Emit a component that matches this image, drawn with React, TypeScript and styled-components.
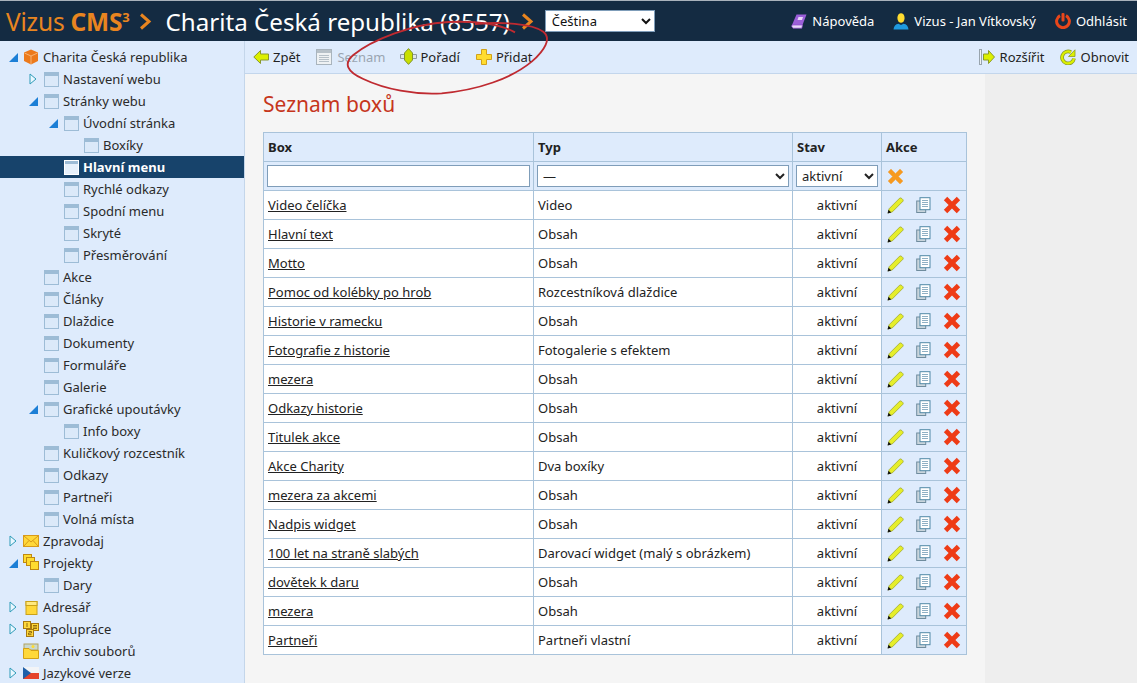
import React from "react";
import styled, { createGlobalStyle } from "styled-components";

const Global = createGlobalStyle`
  html, body { margin: 0; padding: 0; height: 683px; overflow: hidden; background: #f5f5f5; }
  body { font-family: "Noto Sans", "Open Sans", "Liberation Sans", sans-serif; font-size: 13px; color: #222; }
  * { box-sizing: border-box; }
`;

const Page = styled.div`
  position: relative;
  width: 1137px;
  height: 683px;
  display: flex;
  flex-direction: column;
  overflow: hidden;
`;

const Header = styled.header`
  height: 41px;
  flex: none;
  background: #142b42;
  border-top: 1px solid #a9b2bb;
  display: flex;
  align-items: center;
  padding: 0 10px 0 6px;
`;
const Brand = styled.span`
  font-size: 24.5px;
  color: #e9851f;
  white-space: nowrap;
  margin-right: 9px;
  letter-spacing: -0.2px;
  b { font-weight: 700; }
  sup { font-size: 13px; font-weight: 700; vertical-align: 9px; line-height: 0; }
`;
const Chevron = styled.svg`
  flex: none;
  width: 13px;
  height: 17px;
`;
const SiteName = styled.span`
  font-size: 24.15px;
  color: #fff;
  margin: 0 11px 0 14px;
  white-space: nowrap;
`;
const LangSelect = styled.select`
  width: 110px;
  height: 22px;
  margin-left: 11px;
  font-family: "Noto Sans", sans-serif;
  font-size: 13px;
  background: #fff;
  border: 1px solid #7f9db9;
  border-radius: 0;
  padding: 0 0 0 2px;
  color: #111;
`;
const HeaderLinks = styled.nav`
  margin-left: auto;
  display: flex;
  align-items: center;
`;
const HeaderLink = styled.a<{ $ml: number }>`
  display: flex;
  align-items: center;
  gap: 5px;
  color: #fff;
  font-size: 13px;
  margin-left: ${(p) => p.$ml}px;
  white-space: nowrap;
`;

const Body = styled.div`
  flex: 1;
  display: flex;
  min-height: 0;
`;
const Sidebar = styled.aside`
  width: 245px;
  flex: none;
  background: #deebfc;
  border-right: 1px solid #c4d6ea;
  padding-top: 5px;
  overflow: hidden;
`;
const TreeRow = styled.div<{ $level: number; $active?: boolean }>`
  height: 22px;
  display: flex;
  align-items: center;
  padding-left: ${(p) => 9 + p.$level * 20}px;
  background: ${(p) => (p.$active ? "#17436b" : "transparent")};
  color: ${(p) => (p.$active ? "#fff" : "#2a2a2a")};
  font-weight: ${(p) => (p.$active ? 700 : 400)};
  white-space: nowrap;
`;
const Toggle = styled.span`
  width: 10px;
  height: 12px;
  flex: none;
  display: flex;
  align-items: center;
  margin-right: 4px;
`;
const TreeIcon = styled.span`
  width: 16px;
  height: 16px;
  flex: none;
  display: flex;
  align-items: center;
  justify-content: center;
  margin-right: 4px;
`;

const Main = styled.main`
  flex: 1;
  display: flex;
  flex-direction: column;
  min-width: 0;
`;
const Toolbar = styled.div`
  height: 33px;
  flex: none;
  background: #deebfc;
  border-bottom: 1px solid #c3d6ec;
  display: flex;
  align-items: center;
  padding: 0 8px 1px 8px;
`;
const ToolItem = styled.a<{ $disabled?: boolean; $ml?: number; $gap?: number }>`
  display: flex;
  align-items: center;
  gap: ${(p) => p.$gap ?? 4}px;
  margin-left: ${(p) => p.$ml ?? 0}px;
  color: ${(p) => (p.$disabled ? "#9aa5b1" : "#222")};
  white-space: nowrap;
`;
const Spacer = styled.div`
  flex: 1;
`;
const ContentRow = styled.div`
  flex: 1;
  display: flex;
  min-height: 0;
`;
const Content = styled.section`
  width: 740px;
  flex: none;
  background: #f5f5f5;
  padding: 16px 0 0 18px;
`;
const RightPane = styled.div`
  flex: 1;
  background: #eeeeee;
`;
const Title = styled.h1`
  margin: 0 0 13px;
  font-weight: 400;
  font-size: 21px;
  line-height: 29px;
  color: #c6361c;
`;
const Table = styled.table`
  width: 703px;
  table-layout: fixed;
  border-collapse: collapse;
  background: #fff;
  th, td { border: 1px solid #a9c3da; height: 29px; padding: 0 4px; text-align: left; }
  th { background: #deebfc; font-weight: 700; color: #222; }
`;
const FilterCell = styled.td`
  && { background: #deebfc; }
`;
const ActionCell = styled.td`
  && { background: #deebfc; padding: 0 0 0 5px; }
`;
const StateCell = styled.td`
  && { text-align: center; }
`;
const Link = styled.a`
  color: #222;
  text-decoration: underline;
`;
const FilterInput = styled.input`
  display: block;
  width: 263px;
  height: 22px;
  background: #fff;
  border: 1px solid #7f9db9;
  margin-left: -1px;
  padding: 0 3px;
`;
const FilterSelect = styled.select<{ $w: number }>`
  display: block;
  width: ${(p) => p.$w}px;
  height: 22px;
  background: #fff;
  border: 1px solid #7f9db9;
  border-radius: 0;
  margin-left: -1px;
  font-family: "Noto Sans", sans-serif;
  font-size: 13px;
  color: #222;
  padding: 0 0 0 1px;
`;
const Actions = styled.div`
  display: flex;
  align-items: center;
  gap: 12px;
`;
const Scribble = styled.svg`
  position: absolute;
  left: 335px;
  top: 10px;
  width: 220px;
  height: 95px;
  pointer-events: none;
`;

/* ---------- drawn icons ---------- */
const PageIcon = ({ light }: { light?: boolean }) => (
  <svg width="15" height="15" viewBox="0 0 15 15">
    <rect x=".5" y=".5" width="14" height="14" fill={light ? "#e6f0fb" : "#dbe9f9"} stroke={light ? "#fff" : "#9dbcd6"} />
    <rect x="1" y="1" width="13" height="3" fill="#9dbcd6" />
  </svg>
);
const Open = () => (
  <svg width="9" height="9" viewBox="0 0 9 9"><path d="M0 9 L9 0 V9Z" fill="#1c7fd6" /></svg>
);
const Closed = () => (
  <svg width="8" height="12" viewBox="0 0 8 12"><path d="M1 1 L7 6 L1 11Z" fill="#eaf7ff" stroke="#2e9bb8" /></svg>
);
const Cube = () => (
  <svg width="16" height="16" viewBox="0 0 16 16">
    <path d="M8 0.5 L15 3.5 V12 L8 15.5 L1 12 V3.5Z" fill="#ec7a1c" />
    <path d="M1.5 4 L8 7 L14.5 4 M8 7 V15" fill="none" stroke="#f9c48f" strokeWidth=".8" />
  </svg>
);
const Mail = () => (
  <svg width="16" height="12" viewBox="0 0 16 12">
    <rect x=".5" y=".5" width="15" height="11" fill="#ffd83a" stroke="#d89a1a" />
    <path d="M1 1 L8 7 L15 1 M1 11 L6 5.5 M15 11 L10 5.5" fill="none" stroke="#d89a1a" />
  </svg>
);
const Stack = () => (
  <svg width="16" height="16" viewBox="0 0 16 16" style={{ marginTop: -2 }}>
    <rect x=".5" y=".5" width="8" height="8" fill="#ffdc30" stroke="#c08a10" />
    <rect x="3.5" y="3.5" width="8" height="8" fill="#ffdc30" stroke="#c08a10" />
    <rect x="7.5" y="7.5" width="8" height="8" fill="#ffdc30" stroke="#c08a10" />
  </svg>
);
const Book = () => (
  <svg width="14" height="15" viewBox="0 0 14 15">
    <rect x="2" y="1.5" width="11" height="13" fill="#ffd83a" stroke="#c9a21a" />
    <rect x="2" y="1.5" width="11" height="4" fill="#ffe980" stroke="#c9a21a" />
  </svg>
);
const Numbers = () => (
  <svg width="16" height="16" viewBox="0 0 16 16">
    <rect x=".5" y=".5" width="7" height="7" fill="#ffd83a" stroke="#a8780f" />
    <rect x="8.5" y="2.5" width="7" height="7" fill="#ffd83a" stroke="#a8780f" />
    <rect x="3.5" y="8.5" width="7" height="7" fill="#ffd83a" stroke="#a8780f" />
    <path d="M4 2 V6 M10 4.5 H14 M10 6 H14 M10 7.5 H14 M5.5 10.5 H8.5 V12 H5.5 V13.7 H8.5" stroke="#7a5608" fill="none" strokeWidth=".8" />
  </svg>
);
const Archive = () => (
  <svg width="16" height="16" viewBox="0 0 16 16">
    <rect x="1" y="1" width="14" height="6" fill="#c9d8cf" stroke="#b2a35f" />
    <circle cx="10" cy="3.5" r="1.5" fill="#ffdc30" />
    <path d="M.5 5.5 H6 L8 7.5 H15.5 V15.5 H.5Z" fill="#ffd83a" stroke="#d3a017" />
  </svg>
);
const Flag = () => (
  <svg width="16" height="12" viewBox="0 0 16 12">
    <rect width="16" height="6" fill="#f2f4f7" />
    <rect y="6" width="16" height="6" fill="#e5432a" />
    <path d="M0 0 L8 6 L0 12Z" fill="#1f5fa8" />
  </svg>
);
const Purple = () => (
  <svg width="16" height="15" viewBox="0 0 16 15">
    <path d="M5.5 .6 H15.5 L11.5 11 H1 Z" fill="#9b5fd8" />
    <path d="M1 11 H11.5 L10.8 14.2 H2 Q0 12.5 1 11Z" fill="#e9d8fa" stroke="#8a4bc9" strokeWidth=".7" />
    <path d="M7.5 3 H12 L11 6 H6.5Z" fill="#e9d8fa" />
  </svg>
);
const User = () => (
  <svg width="16" height="17" viewBox="0 0 16 17">
    <ellipse cx="8" cy="5" rx="3.6" ry="4.8" fill="#ffdc30" />
    <path d="M0.5 16.5 Q1 11.5 5.5 10.8 L8 12 L10.5 10.8 Q15 11.5 15.5 16.5Z" fill="#1f9ae0" />
  </svg>
);
const Power = () => (
  <svg width="16" height="16" viewBox="0 0 16 16">
    <path d="M5 2.6 A6.4 6.4 0 1 0 11 2.6" fill="none" stroke="#e8461a" strokeWidth="3" />
    <rect x="6.5" y="0" width="3" height="8.5" rx="1" fill="#e8461a" />
  </svg>
);
const ArrowLeft = () => (
  <svg width="16" height="16" viewBox="0 0 16 16">
    <path d="M.8 8 L7.5 1.5 V5 H15.5 V11 H7.5 V14.5Z" fill="#dcf000" stroke="#8a9a2a" />
  </svg>
);
const ListIcon = () => (
  <svg width="16" height="16" viewBox="0 0 16 16">
    <rect x=".5" y=".5" width="15" height="15" fill="#eef1f3" stroke="#a9b4bd" />
    <rect x="1" y="1" width="14" height="3" fill="#b6c0c8" />
    <path d="M3 6.5 H13 M3 8.5 H13 M3 10.5 H13 M3 12.5 H13" stroke="#b6c0c8" />
  </svg>
);
const OrderIcon = () => (
  <svg width="17" height="17" viewBox="0 0 17 17">
    <path d="M.5 6.5 H16.5 V10.5 H.5Z" fill="#dfe6ea" stroke="#8f9aa2" />
    <path d="M8.5 .6 L12.5 5 V12 L8.5 16.4 L4.5 12 V5Z" fill="#c9e000" stroke="#7f9330" />
  </svg>
);
const PlusIcon = () => (
  <svg width="16" height="16" viewBox="0 0 16 16">
    <path d="M5.5 .5 H10.5 V5.5 H15.5 V10.5 H10.5 V15.5 H5.5 V10.5 H.5 V5.5 H5.5Z" fill="#ffdc30" stroke="#d2a21a" />
  </svg>
);
const ExpandIcon = () => (
  <svg width="16" height="16" viewBox="0 0 16 16">
    <rect x=".5" y=".5" width="2" height="15" fill="#eef1f3" stroke="#98a4ad" />
    <path d="M15.5 8 L9.5 1.5 V5 H4.5 V11 H9.5 V14.5Z" fill="#dcf000" stroke="#8a9a2a" />
  </svg>
);
const RefreshIcon = () => (
  <svg width="16" height="16" viewBox="0 0 16 16">
    <path d="M11 3.2 A6 6 0 1 0 14 9.5" fill="none" stroke="#8a9a2a" strokeWidth="3.8" />
    <path d="M11 3.2 A6 6 0 1 0 14 9.5" fill="none" stroke="#dcf000" strokeWidth="2.2" />
    <path d="M15 .8 V7.5 H8.5Z" fill="#dcf000" stroke="#8a9a2a" strokeWidth=".8" />
  </svg>
);
const OrangeX = () => (
  <svg width="17" height="17" viewBox="0 0 17 17">
    <path d="M1 4 L4 1 L8.5 5.5 L13 1 L16 4 L11.5 8.5 L16 13 L13 16 L8.5 11.5 L4 16 L1 13 L5.5 8.5Z" fill="#f79a1e" stroke="#e8a85a" strokeWidth=".5" />
  </svg>
);
const RedX = () => (
  <svg width="18" height="18" viewBox="0 0 17 17">
    <path d="M.8 4 L4 .8 L8.5 5.3 L13 .8 L16.2 4 L11.7 8.5 L16.2 13 L13 16.2 L8.5 11.7 L4 16.2 L.8 13 L5.3 8.5Z" fill="#ee3b16" />
  </svg>
);
const Pencil = () => (
  <svg width="17" height="17" viewBox="0 0 16 16">
    <path d="M1 15 L2 11 L12 1 Q13 .5 14 1.5 L15 2.5 Q15.5 3.5 15 4 L5 14Z" fill="#e6ee2a" stroke="#9aa32a" strokeWidth=".7" />
    <path d="M.5 15.5 L1.4 12 L4 14.6Z" fill="#111" />
  </svg>
);
const Copy = () => (
  <svg width="15" height="16" viewBox="0 0 15 16">
    <rect x=".7" y="4" width="9" height="11.5" fill="#c9d5dc" stroke="#6f8c9e" />
    <rect x="4" y=".7" width="10" height="12" fill="#fff" stroke="#4f88a6" />
    <path d="M6 3.5 H12 M6 5.5 H12 M6 7.5 H12 M6 9.5 H12" stroke="#8fb0c4" />
  </svg>
);
const HeaderChevron = () => (
  <Chevron viewBox="0 0 13 17">
    <path d="M2 1.5 L10 8.5 L2 15.5" fill="none" stroke="#e9851f" strokeWidth="3" />
  </Chevron>
);

/* ---------- data ---------- */
type Node = { label: string; level: number; toggle?: "open" | "closed"; icon?: React.ReactNode; active?: boolean };
const tree: Node[] = [
  { label: "Charita Česká republika", level: 0, toggle: "open", icon: <Cube /> },
  { label: "Nastavení webu", level: 1, toggle: "closed" },
  { label: "Stránky webu", level: 1, toggle: "open" },
  { label: "Úvodní stránka", level: 2, toggle: "open" },
  { label: "Boxíky", level: 3 },
  { label: "Hlavní menu", level: 2, active: true },
  { label: "Rychlé odkazy", level: 2 },
  { label: "Spodní menu", level: 2 },
  { label: "Skryté", level: 2 },
  { label: "Přesměrování", level: 2 },
  { label: "Akce", level: 1 },
  { label: "Články", level: 1 },
  { label: "Dlaždice", level: 1 },
  { label: "Dokumenty", level: 1 },
  { label: "Formuláře", level: 1 },
  { label: "Galerie", level: 1 },
  { label: "Grafické upoutávky", level: 1, toggle: "open" },
  { label: "Info boxy", level: 2 },
  { label: "Kuličkový rozcestník", level: 1 },
  { label: "Odkazy", level: 1 },
  { label: "Partneři", level: 1 },
  { label: "Volná místa", level: 1 },
  { label: "Zpravodaj", level: 0, toggle: "closed", icon: <Mail /> },
  { label: "Projekty", level: 0, toggle: "open", icon: <Stack /> },
  { label: "Dary", level: 1 },
  { label: "Adresář", level: 0, toggle: "closed", icon: <Book /> },
  { label: "Spolupráce", level: 0, toggle: "closed", icon: <Numbers /> },
  { label: "Archiv souborů", level: 0, icon: <Archive /> },
  { label: "Jazykové verze", level: 0, toggle: "closed", icon: <Flag /> },
];

const rows: [string, string][] = [
  ["Video čelíčka", "Video"],
  ["Hlavní text", "Obsah"],
  ["Motto", "Obsah"],
  ["Pomoc od kolébky po hrob", "Rozcestníková dlaždice"],
  ["Historie v ramecku", "Obsah"],
  ["Fotografie z historie", "Fotogalerie s efektem"],
  ["mezera", "Obsah"],
  ["Odkazy historie", "Obsah"],
  ["Titulek akce", "Obsah"],
  ["Akce Charity", "Dva boxíky"],
  ["mezera za akcemi", "Obsah"],
  ["Nadpis widget", "Obsah"],
  ["100 let na straně slabých", "Darovací widget (malý s obrázkem)"],
  ["dovětek k daru", "Obsah"],
  ["mezera", "Obsah"],
  ["Partneři", "Partneři vlastní"],
];

export default function App() {
  return (
    <Page>
      <Global />
      <Header>
        <Brand>Vizus <b>CMS</b><sup>3</sup></Brand>
        <HeaderChevron />
        <SiteName>Charita Česká republika (8557)</SiteName>
        <HeaderChevron />
        <LangSelect defaultValue="cs"><option value="cs">Čeština</option></LangSelect>
        <HeaderLinks>
          <HeaderLink $ml={0}><Purple />Nápověda</HeaderLink>
          <HeaderLink $ml={19}><User />Vizus - Jan Vítkovský</HeaderLink>
          <HeaderLink $ml={19}><Power />Odhlásit</HeaderLink>
        </HeaderLinks>
      </Header>
      <Body>
        <Sidebar>
          {tree.map((n, i) => (
            <TreeRow key={i} $level={n.level} $active={n.active}>
              <Toggle>{n.toggle === "open" ? <Open /> : n.toggle === "closed" ? <Closed /> : null}</Toggle>
              <TreeIcon>{n.icon ?? <PageIcon light={n.active} />}</TreeIcon>
              {n.label}
            </TreeRow>
          ))}
        </Sidebar>
        <Main>
          <Toolbar>
            <ToolItem><ArrowLeft />Zpět</ToolItem>
            <ToolItem $disabled $ml={16} $gap={5}><ListIcon />Seznam</ToolItem>
            <ToolItem $ml={15} $gap={3}><OrderIcon />Pořadí</ToolItem>
            <ToolItem $ml={16}><PlusIcon />Přidat</ToolItem>
            <Spacer />
            <ToolItem $gap={5}><ExpandIcon />Rozšířit</ToolItem>
            <ToolItem $ml={15} $gap={5}><RefreshIcon />Obnovit</ToolItem>
          </Toolbar>
          <ContentRow>
            <Content>
              <Title>Seznam boxů</Title>
              <Table>
                <colgroup>
                  <col style={{ width: 270 }} />
                  <col style={{ width: 259 }} />
                  <col style={{ width: 89 }} />
                  <col style={{ width: 85 }} />
                </colgroup>
                <thead>
                  <tr><th>Box</th><th>Typ</th><th>Stav</th><th>Akce</th></tr>
                  <tr>
                    <FilterCell><FilterInput /></FilterCell>
                    <FilterCell><FilterSelect $w={252}><option>—</option></FilterSelect></FilterCell>
                    <FilterCell><FilterSelect $w={82}><option>aktivní</option></FilterSelect></FilterCell>
                    <ActionCell><Actions><OrangeX /></Actions></ActionCell>
                  </tr>
                </thead>
                <tbody>
                  {rows.map(([box, type], i) => (
                    <tr key={i}>
                      <td><Link>{box}</Link></td>
                      <td>{type}</td>
                      <StateCell>aktivní</StateCell>
                      <ActionCell><Actions><Pencil /><Copy /><RedX /></Actions></ActionCell>
                    </tr>
                  ))}
                </tbody>
              </Table>
            </Content>
            <RightPane />
          </ContentRow>
        </Main>
      </Body>
      <Scribble viewBox="0 0 660 285">
        <path
          d="M540 67 C500 45 430 32 340 36 C230 42 110 90 55 135 C25 160 35 185 85 207 C150 238 240 255 320 250 C430 240 530 205 590 155 C630 120 650 85 625 65 C590 40 500 35 420 42"
          fill="none"
          stroke="#bf2a30"
          strokeWidth="5.5"
        />
      </Scribble>
    </Page>
  );
}
